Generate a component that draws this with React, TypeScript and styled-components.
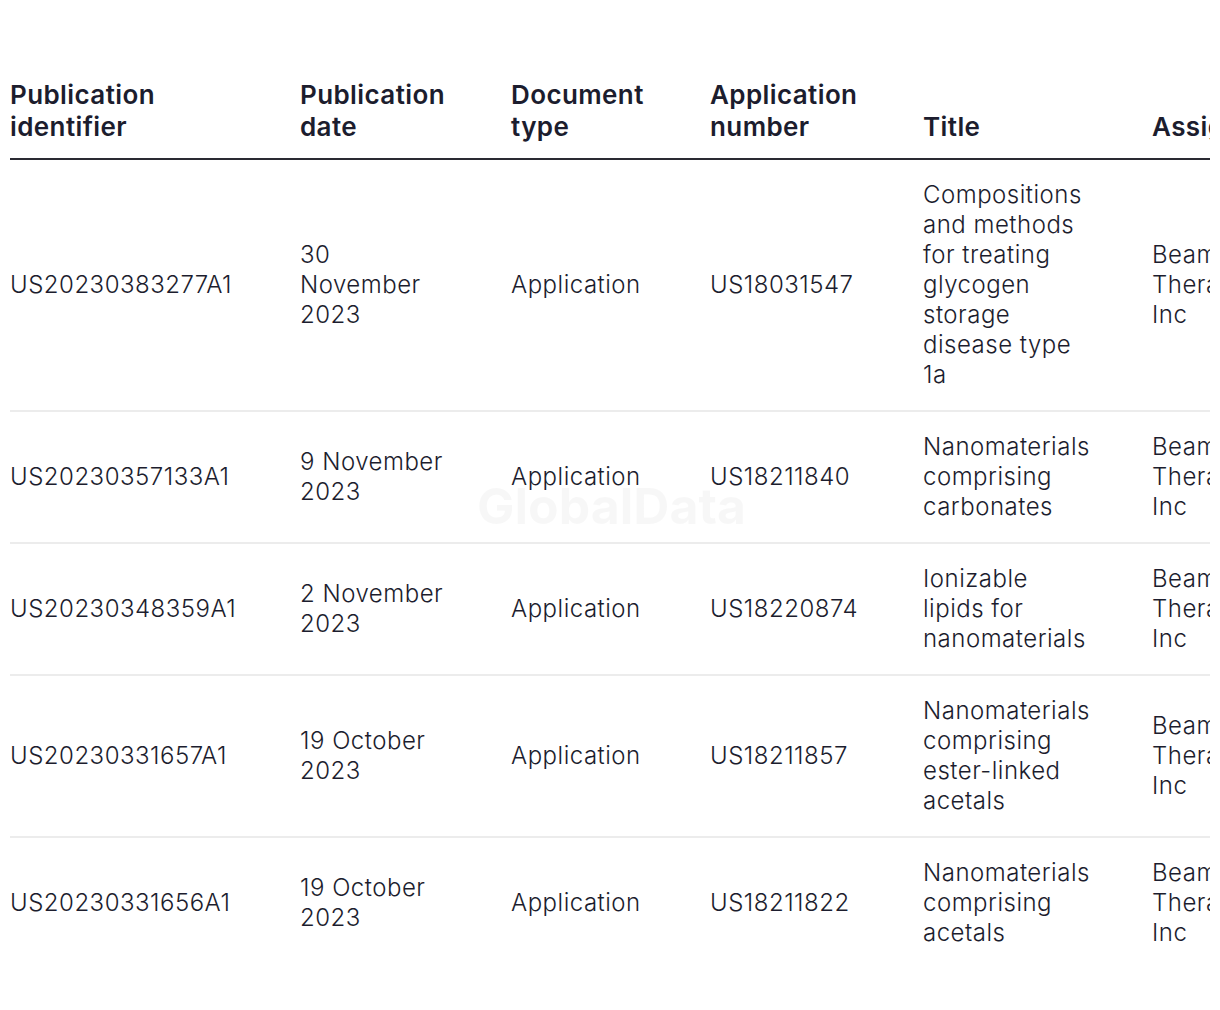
import React from "react";
import styled, { createGlobalStyle } from "styled-components";

type Patent = {
  id: string;
  date: string;
  type: string;
  appNo: string;
  title: string;
  assignee: string;
};

const patents: Patent[] = [
  {
    id: "US20230383277A1",
    date: "30 November 2023",
    type: "Application",
    appNo: "US18031547",
    title: "Compositions and methods for treating glycogen storage disease type 1a",
    assignee: "Beam Therapeutics Inc",
  },
  {
    id: "US20230357133A1",
    date: "9 November 2023",
    type: "Application",
    appNo: "US18211840",
    title: "Nanomaterials comprising carbonates",
    assignee: "Beam Therapeutics Inc",
  },
  {
    id: "US20230348359A1",
    date: "2 November 2023",
    type: "Application",
    appNo: "US18220874",
    title: "Ionizable lipids for nanomaterials",
    assignee: "Beam Therapeutics Inc",
  },
  {
    id: "US20230331657A1",
    date: "19 October 2023",
    type: "Application",
    appNo: "US18211857",
    title: "Nanomaterials comprising ester-linked acetals",
    assignee: "Beam Therapeutics Inc",
  },
  {
    id: "US20230331656A1",
    date: "19 October 2023",
    type: "Application",
    appNo: "US18211822",
    title: "Nanomaterials comprising acetals",
    assignee: "Beam Therapeutics Inc",
  },
];

const columns = [
  { label: "Publication identifier", width: 290 },
  { label: "Publication date", width: 211 },
  { label: "Document type", width: 199 },
  { label: "Application number", width: 213 },
  { label: "Title", width: 229 },
  { label: "Assignee", width: 230 },
];

const GlobalStyle = createGlobalStyle`
  body {
    margin: 0;
    background: #fff;
    font-family: Inter, "Noto Sans", sans-serif;
    color: #1c1d2e;
  }
`;

const Page = styled.div`
  position: relative;
  width: 1200px;
  padding: 64px 0 0 10px;
  overflow: hidden;
`;

const Table = styled.table`
  border-collapse: collapse;
  table-layout: fixed;
  width: 1372px;
`;

const Head = styled.th`
  text-align: left;
  vertical-align: bottom;
  font-size: 26px;
  font-weight: 600;
  line-height: 32px;
  letter-spacing: 0.4px;
  padding: 15px 64px 15px 0;
  border-bottom: 2px solid #2a2a33;
`;

const Row = styled.tr`
  border-bottom: 2px solid #ececec;
  &:last-child {
    border-bottom: none;
  }
`;

const Cell = styled.td`
  vertical-align: middle;
  font-size: 24px;
  font-weight: 300;
  line-height: 30px;
  letter-spacing: 0.5px;
  padding: 20px 64px 20px 0;
`;

const Watermark = styled.div`
  position: absolute;
  left: 477px;
  top: 476px;
  font-size: 50px;
  font-weight: 700;
  color: rgba(0, 0, 0, 0.03);
  pointer-events: none;
  white-space: nowrap;
`;

export default function App() {
  return (
    <>
      <GlobalStyle />
      <Page>
        <Table>
          <colgroup>
            {columns.map((c) => (
              <col key={c.label} style={{ width: c.width }} />
            ))}
          </colgroup>
          <thead>
            <tr>
              {columns.map((c) => (
                <Head key={c.label}>{c.label}</Head>
              ))}
            </tr>
          </thead>
          <tbody>
            {patents.map((p) => (
              <Row key={p.id}>
                <Cell>{p.id}</Cell>
                <Cell>{p.date}</Cell>
                <Cell>{p.type}</Cell>
                <Cell>{p.appNo}</Cell>
                <Cell>{p.title}</Cell>
                <Cell>{p.assignee}</Cell>
              </Row>
            ))}
          </tbody>
        </Table>
        <Watermark>GlobalData</Watermark>
      </Page>
    </>
  );
}
